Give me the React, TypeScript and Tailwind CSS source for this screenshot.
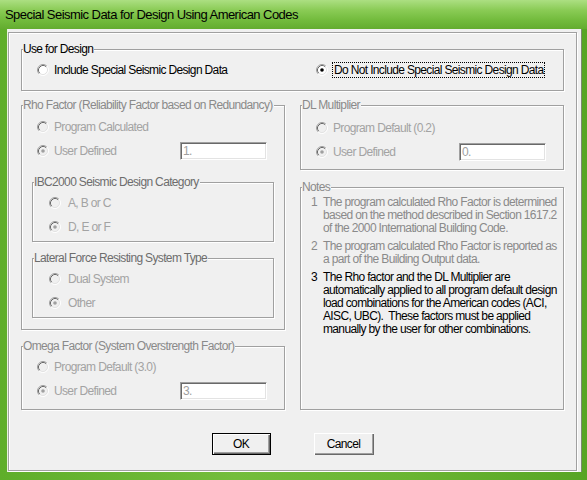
import type { ReactNode } from 'react'

const font = 'font-["Liberation_Sans",Arial,sans-serif] tracking-[-0.65px]'

function Radio({ checked = false, disabled = false }: { checked?: boolean; disabled?: boolean }) {
  return (
    <svg className="shrink-0" width="12" height="12" viewBox="0 0 12 12">
      <circle cx="6" cy="6" r="5" fill={disabled ? '#f0f0f0' : '#ffffff'} />
      <path d="M9.89 2.11 A5.5 5.5 0 0 0 2.11 9.89" fill="none" stroke="#a0a0a0" />
      <path d="M9.18 2.82 A4.5 4.5 0 0 0 2.82 9.18" fill="none" stroke="#696969" />
      <path d="M9.89 2.11 A5.5 5.5 0 0 1 2.11 9.89" fill="none" stroke="#ffffff" />
      <path d="M9.18 2.82 A4.5 4.5 0 0 1 2.82 9.18" fill="none" stroke="#e3e3e3" />
      {checked && <circle cx="6" cy="6" r="1.8" fill={disabled ? '#a0a0a0' : '#000000'} />}
    </svg>
  )
}

function Option({
  label,
  checked,
  disabled = true,
  focus = false,
  gap = 'gap-[5px]',
}: {
  label: string
  checked?: boolean
  disabled?: boolean
  focus?: boolean
  gap?: string
}) {
  return (
    <div className={`flex h-[24px] items-center ${gap}`}>
      <Radio checked={checked} disabled={disabled} />
      <span
        className={`whitespace-nowrap leading-[14px] ${disabled ? 'text-[#a3a3a3]' : 'text-black'} ${
          focus ? 'border border-dotted border-black px-[1px]' : ''
        }`}
      >
        {label}
      </span>
    </div>
  )
}

function TextBox({ value }: { value: string }) {
  return (
    <div className="h-[18px] w-[87px] border border-b-white border-l-[#a0a0a0] border-r-white border-t-[#a0a0a0] bg-white pl-[2px] leading-[16px] text-[#a0a0a0] shadow-[inset_1px_1px_0_#696969,inset_-1px_-1px_0_#e3e3e3]">
      {value}
    </div>
  )
}

function Group({
  label,
  labelColor = 'text-[#8a8a8a]',
  className = '',
  children,
}: {
  label: string
  labelColor?: string
  className?: string
  children?: ReactNode
}) {
  return (
    <div className={`relative border border-[#a0a0a0] shadow-[inset_1px_1px_0_#fff,1px_1px_0_#fff] ${className}`}>
      {/* caption sits over the top edge */}
      <span className={`absolute -top-[8px] left-[1px] bg-[#f0f0f0] pr-[1px] leading-[14px] whitespace-nowrap ${labelColor}`}>
        {label}
      </span>
      {children}
    </div>
  )
}

const notes = [
  {
    n: '1',
    dim: true,
    lines: [
      'The program calculated Rho Factor is determined',
      'based on the method described in Section 1617.2',
      'of the 2000 International Building Code.',
    ],
  },
  {
    n: '2',
    dim: true,
    lines: ['The program calculated Rho Factor is reported as', 'a part of the Building Output data.'],
  },
  {
    n: '3',
    dim: false,
    lines: [
      'The Rho factor and the DL Multiplier are',
      'automatically applied to all program default design',
      'load combinations for the American codes (ACI,',
      'AISC, UBC).  These factors must be applied',
      'manually by the user for other combinations.',
    ],
  },
]

export default function App() {
  return (
    <div className={`flex h-[480px] w-[587px] flex-col bg-[linear-gradient(90deg,#5fae2a_0%,#74bd3c_40%,#6ab532_70%,#57a524_100%)] text-[12px] ${font}`}>
      {/* Title bar */}
      <div className="flex h-[29px] shrink-0 items-center bg-[linear-gradient(180deg,#acdf82_0%,#8acb55_35%,#72bb3c_70%,#63ac2f_100%)] pl-[5px]">
        <span className="whitespace-nowrap text-[13px] tracking-[-0.55px] text-black">
          Special Seismic Data for Design Using American Codes
        </span>
      </div>

      {/* Client area */}
      <div className="mb-[8px] ml-[7px] mr-[5px] flex-1 border-l border-r border-l-[#e8f3df] border-r-[#7a8a70] bg-[#f0f0f0] pb-[1px] pr-[4px] pt-[3px]">
        <div className="h-full border border-[#a0a0a0] px-[12px] pt-[16px] shadow-[inset_1px_1px_0_#fff,1px_1px_0_#fff]">
          <Group label="Use for Design" labelColor="text-black" className="h-[42px]">
            <div className="flex pl-[15px] pt-[8px]">
              <div className="w-[279px]">
                <Option label="Include Special Seismic Design Data" disabled={false} />
              </div>
              <Option label="Do Not Include Special Seismic Design Data" checked disabled={false} focus gap="gap-[4px]" />
            </div>
          </Group>

          <div className="mt-[14px] grid grid-cols-2 gap-[15px]">
            {/* Left column */}
            <div className="flex flex-col">
              <Group label="Rho Factor (Reliability Factor based on Redundancy)" className="h-[225px]">
                <div className="pl-[15px] pt-[9px]">
                  <Option label="Program Calculated" />
                  <div className="flex items-center">
                    <div className="w-[143px]">
                      <Option label="User Defined" checked />
                    </div>
                    <TextBox value="1." />
                  </div>
                </div>
                <div className="mx-[10px] mt-[19px] flex flex-col gap-[16px]">
                  <Group label="IBC2000 Seismic Design Category" labelColor="text-[#6d6d6d]" className="h-[60px]">
                    <div className="pl-[16px] pt-[8px]">
                      <Option label="A, B or C" gap="gap-[7px]" />
                      <Option label="D, E or F" checked gap="gap-[7px]" />
                    </div>
                  </Group>
                  <Group label="Lateral Force Resisting System Type" labelColor="text-[#6d6d6d]" className="h-[60px]">
                    <div className="pl-[16px] pt-[8px]">
                      <Option label="Dual System" gap="gap-[7px]" />
                      <Option label="Other" checked gap="gap-[7px]" />
                    </div>
                  </Group>
                </div>
              </Group>

              <Group label="Omega Factor (System Overstrength Factor)" className="mt-[16px] h-[64px]">
                <div className="pl-[15px] pt-[8px]">
                  <Option label="Program Default (3.0)" />
                  <div className="flex items-center">
                    <div className="w-[143px]">
                      <Option label="User Defined" checked />
                    </div>
                    <TextBox value="3." />
                  </div>
                </div>
              </Group>
            </div>

            {/* Right column */}
            <div className="flex flex-col">
              <Group label="DL Multiplier" className="h-[65px]">
                <div className="pl-[15px] pt-[10px]">
                  <Option label="Program Default (0.2)" />
                  <div className="flex items-center">
                    <div className="w-[143px]">
                      <Option label="User Defined" checked />
                    </div>
                    <TextBox value="0." />
                  </div>
                </div>
              </Group>

              <Group label="Notes" className="mt-[17px] h-[223px]">
                <div className="flex flex-col gap-[5px] pl-[10px] pt-[8px]">
                  {notes.map((note) => (
                    <div key={note.n} className={`flex leading-[13px] ${note.dim ? 'text-[#8a8a8a]' : 'text-black'}`}>
                      <span className="w-[12px] shrink-0">{note.n}</span>
                      <div>
                        {note.lines.map((line) => (
                          <div key={line} className="whitespace-pre">
                            {line}
                          </div>
                        ))}
                      </div>
                    </div>
                  ))}
                </div>
              </Group>
            </div>
          </div>

          {/* Buttons */}
          <div className="mt-[23px] flex justify-center gap-[43px]">
            <button className="h-[22px] w-[59px] border border-black bg-[#f0f0f0] leading-[18px] text-black shadow-[inset_1px_1px_0_#fff,inset_-1px_-1px_0_#696969,inset_-2px_-2px_0_#a0a0a0]">
              OK
            </button>
            <button className="h-[22px] w-[60px] bg-[#f0f0f0] leading-[22px] text-black shadow-[inset_1px_1px_0_#fff,inset_-1px_-1px_0_#696969,inset_-2px_-2px_0_#a0a0a0]">
              Cancel
            </button>
          </div>
        </div>
      </div>
    </div>
  )
}
